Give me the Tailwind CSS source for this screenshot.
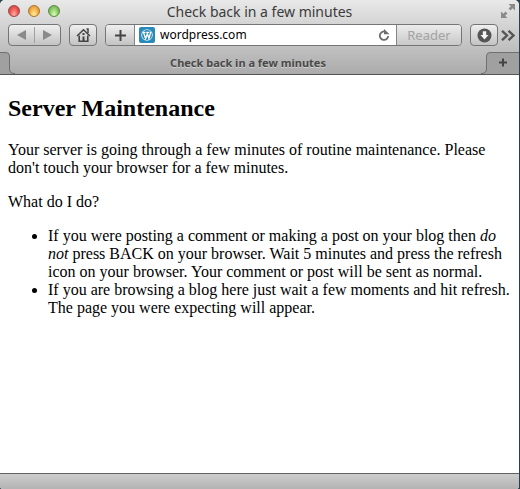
<!DOCTYPE html>
<html lang="en">
<head>
  <meta charset="UTF-8" />
  <meta name="viewport" content="width=device-width, initial-scale=1.0" />
  <title>Check back in a few minutes</title>
  <script src="https://cdn.jsdelivr.net/npm/@tailwindcss/browser@4"></script>
</head>
<body class="bg-[#29404d]">

  <!-- Browser window -->
  <div class="min-h-screen mr-px flex flex-col bg-white rounded-t-[5px] rounded-b-[3px] overflow-hidden">

    <!-- Title bar, toolbar and tabs -->
    <header class="bg-linear-to-b from-[#e9e9e9] via-[#c3c3c3] via-60% to-[#ababab] border-b border-[#555] font-['Noto_Sans',sans-serif] text-[#3b3b3b]">
      <div class="relative h-6 flex items-center justify-center">
        <div class="absolute left-2 top-[5px] flex gap-2">
          <button aria-label="Close" class="size-3 rounded-full border border-[#a04545] bg-radial-[at_50%_85%] from-[#ffb0a8] via-[#ee5f59] to-[#b93636]"></button>
          <button aria-label="Minimize" class="size-3 rounded-full border border-[#a87532] bg-radial-[at_50%_85%] from-[#fff0a0] via-[#f6b64c] to-[#c77f28]"></button>
          <button aria-label="Zoom" class="size-3 rounded-full border border-[#5b8a45] bg-radial-[at_50%_85%] from-[#dcffb8] via-[#92cf6c] to-[#5c9c43]"></button>
        </div>
        <h1 class="text-sm leading-5">Check back in a few minutes</h1>
        <button aria-label="Full screen" class="absolute right-1 top-1">
          <svg class="size-[14px]" viewBox="0 0 14 14" fill="#8a8a8a"><path d="M7.5 0H14V6.500L11.700 4.200L9.500 6.400L7.600 4.500L9.800 2.300Z"/><path d="M6.500 14H0V7.500L2.300 9.800L4.500 7.600L6.400 9.500L4.200 11.700Z"/></svg>
        </button>
      </div>

      <!-- Toolbar -->
      <div class="flex items-center h-[22px] pl-2 pr-[3px]">
        <div class="flex items-center h-[22px] w-[53px] mr-2 rounded-[4px] border border-[#757575] bg-linear-to-b from-[#efefef] to-[#c3c3c3]">
          <button aria-label="Back" class="flex-1 flex justify-center"><svg class="w-[9px] h-[10px]" viewBox="0 0 9 10"><path d="M9 0V10L0 5Z" fill="#8a8a8a"/></svg></button>
          <span class="w-px h-4 bg-[#a0a0a0]"></span>
          <button aria-label="Forward" class="flex-1 flex justify-center"><svg class="w-[9px] h-[10px]" viewBox="0 0 9 10"><path d="M0 0V10L9 5Z" fill="#8a8a8a"/></svg></button>
        </div>
        <button aria-label="Home" class="flex items-center justify-center h-[22px] w-7 mr-2 rounded-[4px] border border-[#757575] bg-linear-to-b from-[#efefef] to-[#c3c3c3]">
          <svg class="size-[15px]" viewBox="0 0 15 15" fill="none" stroke="#454545"><path d="M1 8L7.500 1.700L14 8" stroke-width="1.500"/><path d="M10.500 1H12V5" stroke-width="1.500"/><path d="M3.200 7.500V13.200H11.800V7.500" stroke-width="1.600"/><path d="M7.500 5V7M7.500 8.500V13" stroke-width="2"/></svg>
        </button>
        <form class="flex flex-1 h-[22px] mr-2 rounded-[4px] border border-[#757575] overflow-hidden">
          <button type="button" aria-label="Add bookmark" class="flex items-center justify-center w-[29px] border-r border-[#858585] bg-linear-to-b from-[#efefef] to-[#c3c3c3]">
            <svg class="size-[11px]" viewBox="0 0 11 11"><path d="M5.500 0V11M0 5.500H11" stroke="#444" stroke-width="2"/></svg>
          </button>
          <div class="flex flex-1 items-center min-w-0 pl-1 pr-1.5 bg-white">
            <svg class="size-4 shrink-0" viewBox="0 0 16 16"><rect width="16" height="16" rx="2" fill="#2989b9"/><circle cx="8" cy="8" r="5.800" fill="#d8edf7"/><circle cx="8" cy="8" r="4.900" fill="#2989b9"/><path d="M3.500 5.300H6.500M7.200 5.300H10.300M4.500 5.300L6.600 11.500L8.300 7M7.900 5.300L9.900 11.500L11.800 5" fill="none" stroke="#fff" stroke-width="1.300"/></svg>
            <input type="text" aria-label="Address" value="wordpress.com" class="flex-1 min-w-0 ml-[5px] text-xs leading-5 text-black outline-none" />
            <button type="button" aria-label="Reload" class="shrink-0">
              <svg class="size-3" viewBox="0 0 12 12"><path d="M7 2.600A4.200 4.200 0 1 0 10.200 7" fill="none" stroke="#6c6c6c" stroke-width="1.800"/><path d="M6 0L11.500 5.200H6Z" fill="#6c6c6c"/></svg>
            </button>
          </div>
          <button type="button" disabled class="w-[65px] border-l border-[#858585] bg-linear-to-b from-[#ececec] to-[#c8c8c8] text-[13px] leading-5 text-[#a3a3a3]">Reader</button>
        </form>
        <button aria-label="Downloads" class="flex items-center justify-center h-[22px] w-7 mr-[3px] rounded-[4px] border border-[#757575] bg-linear-to-b from-[#efefef] to-[#c3c3c3]">
          <svg class="size-[15px]" viewBox="0 0 15 15"><circle cx="7.500" cy="7.500" r="7" fill="#555"/><path d="M5.800 3.200H9.200V7H11.500L7.500 11.500L3.500 7H5.800Z" fill="#f5f5f5"/></svg>
        </button>
        <button aria-label="More" class="flex w-[15px]">
          <svg class="w-[15px] h-[11px]" viewBox="0 0 15 11" fill="none" stroke="#555" stroke-width="2.400"><path d="M1 .8L6 5.500L1 10.200M7.500 .8L12.500 5.500L7.500 10.200"/></svg>
        </button>
      </div>

      <!-- Tabs -->
      <div class="flex mt-[6px] h-[22px]">
        <svg class="w-[15px] h-[22px] shrink-0" viewBox="0 0 15 22"><path d="M-1 .5H6Q9.500 .5 9.500 4V17Q9.500 21.500 15 21.500V23H-1Z" fill="#a0a0a0" stroke="#707070"/></svg>
        <button class="flex-1 text-[11px] leading-[22px] font-bold text-[#494949] [text-shadow:0_1px_0_#d0d0d0]">Check back in a few minutes</button>
        <button aria-label="New tab" class="w-[38px] h-[22px] shrink-0">
          <svg class="w-[38px] h-[22px]" viewBox="0 0 38 22"><path d="M39 .5H9Q5.500 .5 5.500 4V17Q5.500 21.500 0 21.500V23H39Z" fill="#a0a0a0" stroke="#707070"/><path d="M22 6.500V14.500M18 10.500H26" stroke="#444" stroke-width="2"/></svg>
        </button>
      </div>
    </header>

    <!-- Page content -->
    <main class="flex-1 px-2 pt-5 font-['Liberation_Serif',serif] text-base leading-[18px] text-black">
      <h2 class="text-2xl leading-[26px] font-bold mb-5">Server Maintenance</h2>
      <p class="mb-4">Your server is going through a few minutes of routine maintenance. Please don't touch your browser for a few minutes.</p>
      <p class="mb-4">What do I do?</p>
      <ul class="list-disc pl-10 -mr-1">
        <li>If you were posting a comment or making a post on your blog then <em>do not</em> press BACK on your browser. Wait 5 minutes and press the refresh icon on your browser. Your comment or post will be sent as normal.</li>
        <li>If you are browsing a blog here just wait a few moments and hit refresh. The page you were expecting will appear.</li>
      </ul>
    </main>

    <!-- Status bar -->
    <footer class="h-4 border-t border-[#606060] bg-linear-to-b from-[#cdcdcd] to-[#b3b3b3]"></footer>
  </div>

</body>
</html>
